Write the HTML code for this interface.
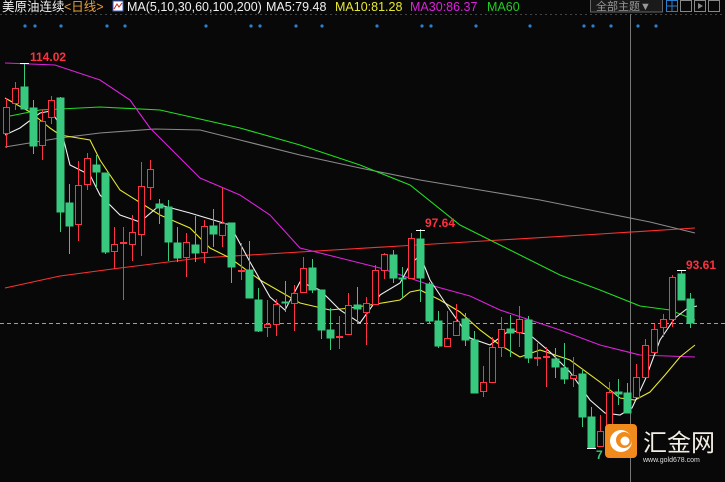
<!DOCTYPE html>
<html><head><meta charset="utf-8"><style>
html,body{margin:0;padding:0;background:#080808;width:725px;height:482px;overflow:hidden}
svg{display:block}
text{font-family:"Liberation Sans","Noto Sans CJK SC",sans-serif}
</style></head><body>
<svg width="725" height="482" viewBox="0 0 725 482" xmlns="http://www.w3.org/2000/svg">
<rect width="725" height="482" fill="#080808"/>
<line x1="0" y1="14.5" x2="725" y2="14.5" stroke="#444" stroke-dasharray="2,3"/>
<g fill="#2a7fd0">
<circle cx="25" cy="26" r="1.6"/><circle cx="35" cy="26" r="1.6"/><circle cx="61" cy="26" r="1.6"/><circle cx="107" cy="26" r="1.6"/><circle cx="125" cy="26" r="1.6"/><circle cx="206" cy="26" r="1.6"/><circle cx="251" cy="26" r="1.6"/><circle cx="260" cy="26" r="1.6"/><circle cx="296" cy="26" r="1.6"/><circle cx="322" cy="26" r="1.6"/><circle cx="377" cy="26" r="1.6"/><circle cx="422" cy="26" r="1.6"/><circle cx="431" cy="26" r="1.6"/><circle cx="476" cy="26" r="1.6"/><circle cx="530" cy="26" r="1.6"/><circle cx="584" cy="26" r="1.6"/><circle cx="593" cy="26" r="1.6"/><circle cx="611" cy="26" r="1.6"/><circle cx="638" cy="26" r="1.6"/><circle cx="656" cy="26" r="1.6"/>
</g>
<line x1="630.5" y1="14" x2="630.5" y2="482" stroke="#777" stroke-width="1"/>
<line x1="0" y1="323.5" x2="725" y2="323.5" stroke="#e8902a" stroke-dasharray="4,3"/>
<g fill="none" stroke-width="1.1">
<polyline stroke="#ff3030" points="5,288 60,276 120,268 200,258 300,252 400,246 500,240 600,234 695,228"/>
<polyline stroke="#8a8a8a" points="5,147 60,138 100,133 155,129 200,130 240,140 300,155 360,168 420,180 480,190 540,200 600,212 650,222 695,233"/>
<polyline stroke="#22dd22" points="5,117 40,110 100,107 160,110 240,128 300,145 360,165 410,185 460,225 500,245 530,260 560,275 600,290 640,306 670,310 695,320"/>
<polyline stroke="#dd22dd" points="5,63 55,65 100,80 130,100 150,128 200,178 240,195 270,215 300,248 340,258 380,268 430,285 470,296 500,310 560,330 600,345 640,355 695,357"/>
<polyline stroke="#e8e830" points="5,98 30,112 50,128 60,135 90,140 100,160 120,190 160,215 190,228 210,248 230,258 260,280 300,303 330,310 350,308 370,305 400,300 410,292 420,290 440,300 460,312 480,330 500,345 520,357 540,350 570,360 600,382 620,398 635,400 650,392 665,375 680,357 695,345"/>
<polyline stroke="#f0f0f0" points="5,135 20,128 40,113 51,111 60,125 70,165 90,175 100,195 120,215 140,222 160,205 190,213 230,225 250,262 270,297 285,310 300,282 320,290 340,310 360,323 380,295 400,283 410,265 420,255 430,280 450,310 470,338 490,345 510,330 530,335 550,352 570,372 590,400 605,413 620,415 632,408 645,380 660,340 675,318 688,308 697,306"/>
</g>
<g stroke="#ff3344" fill="#080808" stroke-width="1">
<line x1="6.5" y1="98" x2="6.5" y2="148"/><rect x="3.5" y="107.5" width="6" height="26"/>
<line x1="15.5" y1="82" x2="15.5" y2="110"/><rect x="12.5" y="88.5" width="6" height="15"/>
<line x1="42.5" y1="110" x2="42.5" y2="160"/><rect x="39.5" y="121.5" width="6" height="24"/>
<line x1="51.5" y1="96" x2="51.5" y2="124"/><rect x="48.5" y="100.5" width="6" height="17"/>
<line x1="78.5" y1="161" x2="78.5" y2="241"/><rect x="75.5" y="185.5" width="6" height="39"/>
<line x1="87.5" y1="153" x2="87.5" y2="190"/><rect x="84.5" y="158.5" width="6" height="26"/>
<line x1="114.5" y1="227" x2="114.5" y2="269"/><rect x="111.5" y="244.5" width="6" height="7"/>
<line x1="123.5" y1="227" x2="123.5" y2="300"/><rect x="120.5" y="242.5" width="6" height="1"/>
<line x1="132.5" y1="215" x2="132.5" y2="261"/><rect x="129.5" y="232.5" width="6" height="12"/>
<line x1="141.5" y1="162" x2="141.5" y2="256"/><rect x="138.5" y="186.5" width="6" height="48"/>
<line x1="150.5" y1="160" x2="150.5" y2="200"/><rect x="147.5" y="169.5" width="6" height="18"/>
<line x1="186.5" y1="233" x2="186.5" y2="277"/><rect x="183.5" y="242.5" width="6" height="15"/>
<line x1="204.5" y1="220" x2="204.5" y2="263"/><rect x="201.5" y="226.5" width="6" height="26"/>
<line x1="222.5" y1="188" x2="222.5" y2="247"/><rect x="219.5" y="223.5" width="6" height="12"/>
<line x1="241.5" y1="243" x2="241.5" y2="280"/><rect x="238.5" y="270.5" width="6" height="1"/>
<line x1="267.5" y1="300" x2="267.5" y2="337"/><rect x="264.5" y="324.5" width="6" height="3"/>
<line x1="276.5" y1="299" x2="276.5" y2="336"/><rect x="273.5" y="304.5" width="6" height="20"/>
<line x1="294.5" y1="285" x2="294.5" y2="331"/><rect x="291.5" y="293.5" width="6" height="10"/>
<line x1="303.5" y1="257" x2="303.5" y2="293"/><rect x="300.5" y="268.5" width="6" height="24"/>
<line x1="339.5" y1="316" x2="339.5" y2="349"/><rect x="336.5" y="336.5" width="6" height="1"/>
<line x1="348.5" y1="293" x2="348.5" y2="334"/><rect x="345.5" y="305.5" width="6" height="29"/>
<line x1="366.5" y1="297" x2="366.5" y2="345"/><rect x="363.5" y="303.5" width="6" height="9"/>
<line x1="375.5" y1="265" x2="375.5" y2="304"/><rect x="372.5" y="270.5" width="6" height="34"/>
<line x1="384.5" y1="253" x2="384.5" y2="279"/><rect x="381.5" y="254.5" width="6" height="16"/>
<line x1="411.5" y1="233" x2="411.5" y2="278"/><rect x="408.5" y="238.5" width="6" height="40"/>
<line x1="447.5" y1="311" x2="447.5" y2="346"/><rect x="444.5" y="338.5" width="6" height="8"/>
<line x1="456.5" y1="304" x2="456.5" y2="335"/><rect x="453.5" y="321.5" width="6" height="14"/>
<line x1="483.5" y1="366" x2="483.5" y2="397"/><rect x="480.5" y="382.5" width="6" height="9"/>
<line x1="492.5" y1="337" x2="492.5" y2="382"/><rect x="489.5" y="347.5" width="6" height="35"/>
<line x1="501.5" y1="317" x2="501.5" y2="357"/><rect x="498.5" y="329.5" width="6" height="18"/>
<line x1="519.5" y1="306" x2="519.5" y2="347"/><rect x="516.5" y="319.5" width="6" height="13"/>
<line x1="537.5" y1="343" x2="537.5" y2="366"/><rect x="534.5" y="357.5" width="6" height="1"/>
<line x1="546.5" y1="347" x2="546.5" y2="387"/><rect x="543.5" y="356.5" width="6" height="1"/>
<line x1="573.5" y1="357" x2="573.5" y2="387"/><rect x="570.5" y="375.5" width="6" height="3"/>
<line x1="600.5" y1="415" x2="600.5" y2="446"/><rect x="597.5" y="431.5" width="6" height="15"/>
<line x1="609.5" y1="382" x2="609.5" y2="433"/><rect x="606.5" y="392.5" width="6" height="38"/>
<line x1="636.5" y1="364" x2="636.5" y2="397"/><rect x="633.5" y="377.5" width="6" height="20"/>
<line x1="645.5" y1="339" x2="645.5" y2="377"/><rect x="642.5" y="345.5" width="6" height="32"/>
<line x1="654.5" y1="324" x2="654.5" y2="352"/><rect x="651.5" y="329.5" width="6" height="23"/>
<line x1="663.5" y1="314" x2="663.5" y2="337"/><rect x="660.5" y="319.5" width="6" height="8"/>
<line x1="672.5" y1="275" x2="672.5" y2="327"/><rect x="669.5" y="277.5" width="6" height="42"/>
</g>
<g stroke="#38c87e" fill="#38c87e" stroke-width="1">
<line x1="24.5" y1="63" x2="24.5" y2="109"/><rect x="21" y="87" width="7" height="22"/>
<line x1="33.5" y1="100" x2="33.5" y2="154"/><rect x="30" y="108" width="7" height="38"/>
<line x1="60.5" y1="97" x2="60.5" y2="232"/><rect x="57" y="98" width="7" height="114"/>
<line x1="69.5" y1="184" x2="69.5" y2="254"/><rect x="66" y="203" width="7" height="23"/>
<line x1="96.5" y1="155" x2="96.5" y2="188"/><rect x="93" y="165" width="7" height="7"/>
<line x1="105.5" y1="173" x2="105.5" y2="254"/><rect x="102" y="173" width="7" height="79"/>
<line x1="159.5" y1="199" x2="159.5" y2="224"/><rect x="156" y="204" width="7" height="4"/>
<line x1="168.5" y1="200" x2="168.5" y2="261"/><rect x="165" y="207" width="7" height="35"/>
<line x1="177.5" y1="227" x2="177.5" y2="262"/><rect x="174" y="243" width="7" height="15"/>
<line x1="195.5" y1="216" x2="195.5" y2="262"/><rect x="192" y="245" width="7" height="8"/>
<line x1="213.5" y1="209" x2="213.5" y2="247"/><rect x="210" y="226" width="7" height="8"/>
<line x1="231.5" y1="223" x2="231.5" y2="283"/><rect x="228" y="223" width="7" height="44"/>
<line x1="249.5" y1="241" x2="249.5" y2="298"/><rect x="246" y="270" width="7" height="28"/>
<line x1="258.5" y1="288" x2="258.5" y2="332"/><rect x="255" y="300" width="7" height="31"/>
<line x1="285.5" y1="281" x2="285.5" y2="312"/><rect x="282" y="302" width="7" height="1"/>
<line x1="312.5" y1="259" x2="312.5" y2="293"/><rect x="309" y="268" width="7" height="22"/>
<line x1="321.5" y1="290" x2="321.5" y2="339"/><rect x="318" y="290" width="7" height="40"/>
<line x1="330.5" y1="308" x2="330.5" y2="350"/><rect x="327" y="330" width="7" height="8"/>
<line x1="357.5" y1="287" x2="357.5" y2="323"/><rect x="354" y="305" width="7" height="4"/>
<line x1="393.5" y1="250" x2="393.5" y2="283"/><rect x="390" y="255" width="7" height="23"/>
<line x1="402.5" y1="267" x2="402.5" y2="297"/><rect x="399" y="278" width="7" height="1"/>
<line x1="420.5" y1="229" x2="420.5" y2="302"/><rect x="417" y="239" width="7" height="39"/>
<line x1="429.5" y1="282" x2="429.5" y2="324"/><rect x="426" y="284" width="7" height="37"/>
<line x1="438.5" y1="311" x2="438.5" y2="348"/><rect x="435" y="321" width="7" height="25"/>
<line x1="465.5" y1="313" x2="465.5" y2="346"/><rect x="462" y="319" width="7" height="21"/>
<line x1="474.5" y1="331" x2="474.5" y2="393"/><rect x="471" y="340" width="7" height="53"/>
<line x1="510.5" y1="315" x2="510.5" y2="357"/><rect x="507" y="329" width="7" height="4"/>
<line x1="528.5" y1="316" x2="528.5" y2="363"/><rect x="525" y="320" width="7" height="38"/>
<line x1="555.5" y1="348" x2="555.5" y2="378"/><rect x="552" y="359" width="7" height="8"/>
<line x1="564.5" y1="343" x2="564.5" y2="384"/><rect x="561" y="368" width="7" height="11"/>
<line x1="582.5" y1="369" x2="582.5" y2="427"/><rect x="579" y="374" width="7" height="43"/>
<line x1="591.5" y1="407" x2="591.5" y2="448"/><rect x="588" y="417" width="7" height="31"/>
<line x1="618.5" y1="379" x2="618.5" y2="405"/><rect x="615" y="392" width="7" height="2"/>
<line x1="627.5" y1="383" x2="627.5" y2="413"/><rect x="624" y="393" width="7" height="20"/>
<line x1="681.5" y1="270" x2="681.5" y2="300"/><rect x="678" y="274" width="7" height="26"/>
<line x1="690.5" y1="293" x2="690.5" y2="328"/><rect x="687" y="299" width="7" height="24"/>
</g>
<g stroke="#fff" stroke-width="1">
<line x1="20" y1="63.5" x2="29" y2="63.5"/><line x1="416" y1="230.5" x2="425" y2="230.5"/><line x1="677" y1="270.5" x2="686" y2="270.5"/><line x1="587" y1="448.5" x2="596" y2="448.5"/>
</g>
<g font-size="12" font-weight="bold" fill="#ff3040">
<text x="30" y="61">114.02</text>
<text x="425" y="227">97.64</text>
<text x="686" y="269">93.61</text>
</g>
<text x="596" y="459" font-size="12" font-weight="bold" fill="#38c87e">7</text>
<rect x="605" y="424" width="32" height="34" rx="4" fill="#f08a1c"/>
<circle cx="621" cy="441" r="11" fill="#fff"/>
<circle cx="624" cy="440" r="8" fill="#f08a1c"/>
<circle cx="625" cy="441" r="4.5" fill="#fff"/>
<text x="643" y="451" font-size="24" fill="#f3eee4" font-family="Noto Sans CJK SC,sans-serif">汇金网</text>
<text x="643" y="462" font-size="7" fill="#ddd">www.gold678.com</text>
<rect x="0" y="0" width="725" height="13" fill="#080808"/>
<g font-size="12.5">
<text x="2" y="11" fill="#f0f0f0">美原油连续</text>
<text x="64" y="11" fill="#e8a040">&lt;日线&gt;</text>
<rect x="113" y="1" width="10" height="10" fill="#fff" stroke="#4060c0"/>
<polyline points="114,9 117,4 119,7 122,3" fill="none" stroke="#d02020"/>
<text x="127" y="11" fill="#f0f0f0">MA(5,10,30,60,100,200)</text>
<text x="266" y="11" fill="#f0f0f0">MA5:79.48</text>
<text x="335" y="11" fill="#e8e830">MA10:81.28</text>
<text x="410" y="11" fill="#dd22dd">MA30:86.37</text>
<text x="487" y="11" fill="#22cc22">MA60</text>
</g>
<rect x="590.5" y="-1" width="72" height="13" fill="#1a1a1a" stroke="#666"/>
<text x="596" y="10" font-size="11" fill="#999">全部主题▼</text>
<rect x="666.5" y="0.5" width="11" height="11" fill="none" stroke="#2a7fd0"/>
<line x1="672" y1="1" x2="672" y2="11" stroke="#2a7fd0"/><line x1="667" y1="6" x2="677" y2="6" stroke="#2a7fd0"/>
<rect x="680.5" y="0.5" width="11" height="11" fill="none" stroke="#888"/>
<rect x="694.5" y="0.5" width="11" height="11" fill="none" stroke="#888"/>
<polygon points="698,3 703,6 698,9" fill="#888"/>
<rect x="708.5" y="0.5" width="11" height="11" fill="none" stroke="#888"/>
</svg>
</body></html>
